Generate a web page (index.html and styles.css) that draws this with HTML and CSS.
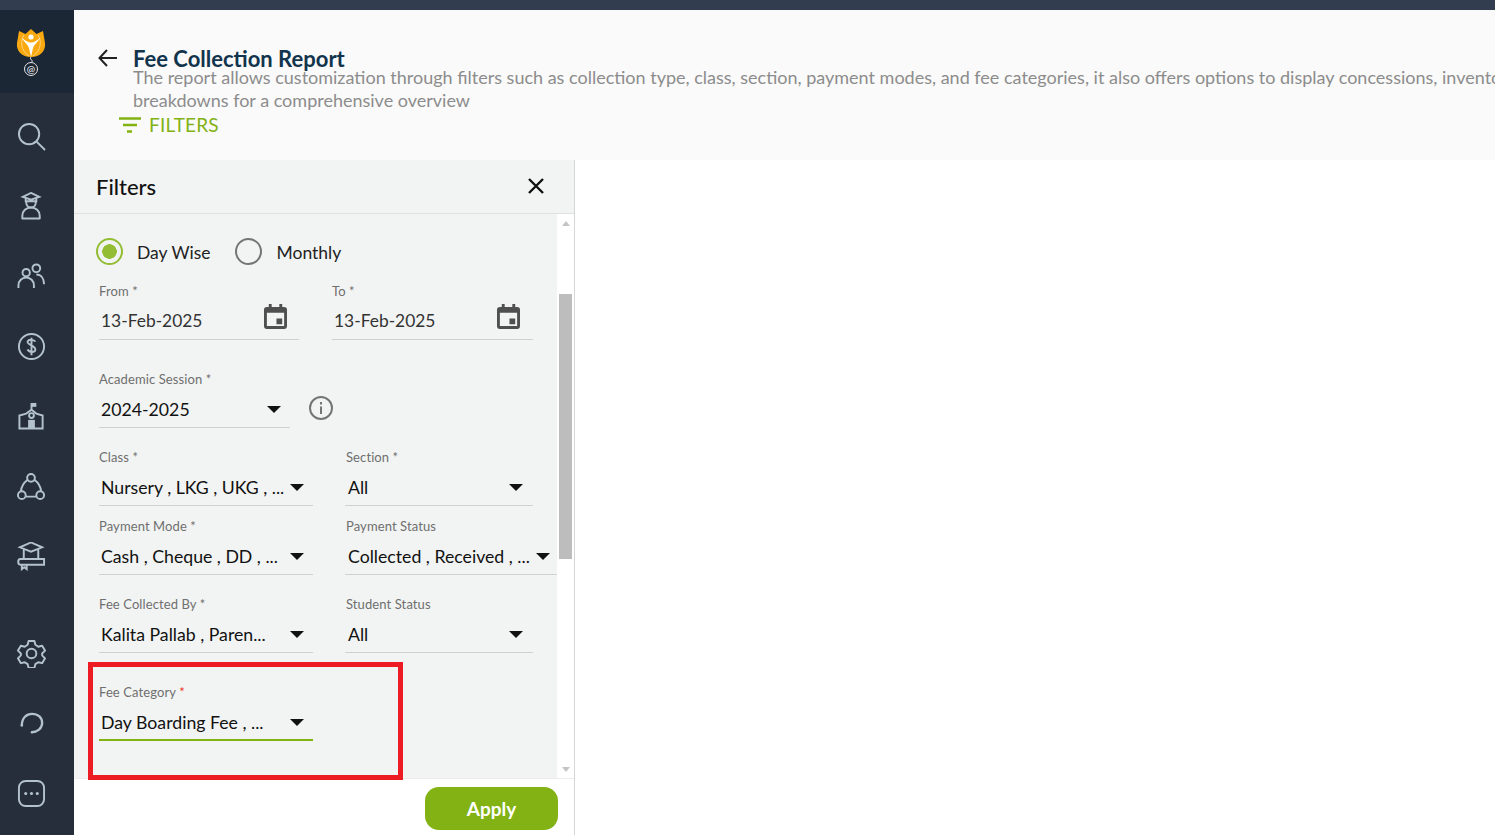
FILE: index.html
```html
<!DOCTYPE html>
<html lang="en">
<head>
    <meta charset="UTF-8">
    <title>Fee Collection Report</title>
    <link rel="stylesheet" href="styles.css">
</head>
<body>
    <div class="top-strip"></div>
    <div class="app">
        <nav class="sidebar">
            <div class="logo">
                <svg width="30" height="47" viewBox="0 0 30 47">
                    <path d="M15 0l5.500 5L27 2l2 12c1 8-5 14-14 14S0 22 1 14L3 2l6.500 3z" fill="#f9a90f"/>
                    <path d="M8 6C4 12 5 22 13 27M22 6c4 6 3 16-5 21" fill="none" stroke="#fdd27c" stroke-width="1"/>
                    <path d="M5.500 8.500C9 14 12 16 13 19l2 9 2-9c1-3 4-5 7.500-10.500C20.500 12 18 13.500 15 13.500S9.500 12 5.500 8.500z" fill="#fff"/>
                    <circle cx="15" cy="8" r="2.600" fill="#fff"/>
                    <path d="M15 28c-2 2 2 3 1 5" fill="none" stroke="#fff" stroke-width="1"/>
                    <circle cx="15" cy="40" r="6.500" fill="none" stroke="#e8e8e8" stroke-width="1"/>
                    <text x="15" y="43.500" class="logo-at">@</text>
                </svg>
            </div>
            <div class="nav-group">
                <a class="nav-item"><svg viewBox="0 0 30 30"><circle cx="12.500" cy="12.500" r="10.500"/><path d="M20 20l9 9"/></svg></a>
                <a class="nav-item"><svg viewBox="0 0 30 30"><path d="M14.500 1L23 5l-8.500 3L6 5zM9 6.500v3h11v-3"/><path d="M9.500 10c0 4 2.500 6 5 6s5-2 5-6"/><path d="M5.500 27.500v-3c0-5 4-8.500 9-8.500s9 3.500 9 8.500v3z" stroke-linejoin="round"/></svg></a>
                <a class="nav-item"><svg viewBox="0 0 30 30"><circle cx="9.500" cy="11" r="3.800"/><circle cx="20" cy="6.500" r="4"/><path d="M1.500 27v-3a8 8 0 0 1 16 0v3M20 13c5 0 8 4 8 10"/></svg></a>
                <a class="nav-item"><svg viewBox="0 0 30 30"><circle cx="15" cy="15" r="13"/><path d="M19 10c-1-2-7-3-8 0s8 4 8 8-7 3-8 0M15 6v18"/></svg></a>
                <a class="nav-item"><svg viewBox="0 0 30 30"><path d="M2.500 27.500V14l7-2L15 8l5 4 6.500 2v13.500zM15 8V1"/><path d="M15 1h5v4h-5z" class="solid"/><circle cx="15" cy="14" r="2.500"/><rect x="11.500" y="18.500" width="7" height="9" class="solid"/></svg></a>
                <a class="nav-item"><svg viewBox="0 0 30 30"><circle cx="14.500" cy="6" r="4"/><circle cx="5" cy="24" r="4"/><circle cx="24" cy="24" r="4"/><path d="M11 8C7 11 4.500 15 4 20M18 8c4 3 6.500 7 7 12M9 25.500h11"/></svg></a>
                <a class="nav-item"><svg viewBox="0 0 30 30"><path d="M14.500.5L26 5.500 14.500 10 3 5.500zM7 8v9.500M22 8v9.500"/><path d="M3.500 17.500H28v6H3.500c-3 0-3-6 0-6zM5 23.500V28l2.500-2 2.500 2v-4.500"/></svg></a>
            </div>
            <div class="nav-group nav-bottom">
                <a class="nav-item"><svg viewBox="0 0 30 30"><circle cx="15" cy="15" r="5"/><path d="M12 2h6l1 4 3 2 4-1 3 5-3 3v2l3 3-3 5-4-1-3 2-1 4h-6l-1-4-3-2-4 1-3-5 3-3v-2l-3-3 3-5 4 1 3-2z" stroke-linejoin="round"/></svg></a>
                <a class="nav-item"><svg viewBox="0 0 30 30"><path d="M5 17C5 9 10 5 15.500 5 22 5 26 9 26 14.500 26 20 21 24 15 24" stroke-width="2.400"/><circle cx="15.500" cy="24" r="1.300" class="solid"/><circle cx="5" cy="17" r="1.300" class="solid"/></svg></a>
                <a class="nav-item"><svg viewBox="0 0 30 30"><rect x="2" y="2" width="26" height="26" rx="7"/><circle cx="9" cy="15" r="1.600" class="solid"/><circle cx="15" cy="15" r="1.600" class="solid"/><circle cx="21" cy="15" r="1.600" class="solid"/></svg></a>
            </div>
        </nav>

        <main class="main">
            <header class="page-head">
                <div class="title-row">
                    <svg class="back-icon" width="20" height="18" viewBox="0 0 20 18"><path d="M19 9H2M9 1L1.500 9 9 17"/></svg>
                    <div class="title-text">
                        <h1>Fee Collection Report</h1>
                        <p>The report allows customization through filters such as collection type, class, section, payment modes, and fee categories, it also offers options to display concessions, inventory and other breakdowns for a comprehensive overview</p>
                    </div>
                </div>
                <button class="filter-toggle">
                    <svg width="24" height="16" viewBox="0 0 24 16"><path d="M1 1.500h22M5 8h14M9 14.500h5"/></svg>
                    FILTERS
                </button>
            </header>

            <section class="panel">
                <div class="panel-head">
                    <h2>Filters</h2>
                    <svg class="close-icon" width="18" height="18" viewBox="0 0 18 18"><path d="M2 2l14 14M16 2L2 16"/></svg>
                </div>
                <div class="panel-body">
                    <form class="form">
                        <div class="radio-row">
                            <span class="radio on"></span><span class="radio-label">Day Wise</span>
                            <span class="radio"></span><span class="radio-label">Monthly</span>
                        </div>

                        <div class="row row-dates">
                            <div class="field w-from">
                                <label>From *</label>
                                <div class="value">13-Feb-2025 <svg class="cal" viewBox="0 0 24 26"><path d="M5 0h3v3h8V0h3v3h2a3 3 0 0 1 3 3v17a3 3 0 0 1-3 3H3a3 3 0 0 1-3-3V6a3 3 0 0 1 3-3h2zM3 9v14h18V9zM13 15h6v6h-6z" fill-rule="evenodd"/></svg></div>
                            </div>
                            <div class="field w-to">
                                <label>To *</label>
                                <div class="value">13-Feb-2025 <svg class="cal" viewBox="0 0 24 26"><path d="M5 0h3v3h8V0h3v3h2a3 3 0 0 1 3 3v17a3 3 0 0 1-3 3H3a3 3 0 0 1-3-3V6a3 3 0 0 1 3-3h2zM3 9v14h18V9zM13 15h6v6h-6z" fill-rule="evenodd"/></svg></div>
                            </div>
                        </div>

                        <div class="row row-session">
                            <div class="field w-session">
                                <label>Academic Session *</label>
                                <div class="value dark">2024-2025<span class="caret"></span></div>
                            </div>
                            <svg class="info-icon" width="26" height="26" viewBox="0 0 26 26"><circle cx="13" cy="13" r="11"/><path d="M13 11.500v7.500M13 7v2.500"/></svg>
                        </div>

                        <div class="row row-near">
                            <div class="field w-left">
                                <label>Class *</label>
                                <div class="value dark">Nursery , LKG , UKG , ...<span class="caret"></span></div>
                            </div>
                            <div class="field w-right">
                                <label>Section *</label>
                                <div class="value dark">All<span class="caret"></span></div>
                            </div>
                        </div>

                        <div class="row row-tight">
                            <div class="field w-left">
                                <label>Payment Mode *</label>
                                <div class="value dark">Cash , Cheque , DD , ...<span class="caret"></span></div>
                            </div>
                            <div class="field w-wide">
                                <label>Payment Status</label>
                                <div class="value dark">Collected , Received , ...<span class="caret"></span></div>
                            </div>
                        </div>

                        <div class="row row-near">
                            <div class="field w-left">
                                <label>Fee Collected By *</label>
                                <div class="value dark">Kalita Pallab , Paren...<span class="caret"></span></div>
                            </div>
                            <div class="field w-right">
                                <label>Student Status</label>
                                <div class="value dark">All<span class="caret"></span></div>
                            </div>
                        </div>

                        <div class="row row-session">
                            <div class="field w-left active">
                                <label>Fee Category <em>*</em></label>
                                <div class="value dark">Day Boarding Fee , ...<span class="caret"></span></div>
                            </div>
                        </div>
                    </form>
                    <div class="scrollbar">
                        <span class="arrow up"></span>
                        <span class="thumb"></span>
                        <span class="arrow down"></span>
                    </div>
                </div>
                <div class="panel-foot">
                    <button class="apply">Apply</button>
                </div>
                <div class="highlight"></div>
            </section>
        </main>
    </div>
</body>
</html>
```

FILE: styles.css
```css
* {
    box-sizing: border-box;
}
html, body {
    height: 100%;
}
body {
    margin: 0;
    font-family: Lato, "Noto Sans", sans-serif;
    background-color: #fff;
    color: #1b1b1b;
    overflow: hidden;
    display: flex;
    flex-direction: column;
}
.top-strip {
    height: 10px;
    background-color: #333d50;
    flex: none;
}
.app {
    flex: 1;
    display: flex;
    min-height: 0;
}

/* sidebar */
.sidebar {
    width: 74px;
    flex: none;
    background-color: #252e3a;
    display: flex;
    flex-direction: column;
}
.logo {
    height: 83px;
    background-color: #1c2735;
    display: flex;
    justify-content: center;
    align-items: flex-start;
    padding: 19px 12px 0 0;
}
.logo-at {
    font-size: 10px;
    fill: #fff;
    text-anchor: middle;
}
.nav-group {
    padding-top: 8px;
}
.nav-bottom {
    padding-top: 27px;
}
.nav-item {
    height: 70px;
    display: flex;
    align-items: center;
    padding-left: 17px;
}
.nav-item svg {
    width: 29px;
    height: 29px;
    fill: none;
    stroke: #b4c2cf;
    stroke-width: 2;
}
.nav-item svg .solid {
    fill: #b4c2cf;
    stroke: none;
}

/* page */
.main {
    flex: 1;
    min-width: 0;
    display: flex;
    flex-direction: column;
}
.page-head {
    height: 150px;
    flex: none;
    background-color: #fafafa;
    padding: 40px 0 0 24px;
    overflow: hidden;
}
.title-row {
    display: flex;
    gap: 15px;
    width: 1500px;
}
.back-icon {
    flex: none;
    margin-top: -1px;
    fill: none;
    stroke: #222;
    stroke-width: 2;
}
.title-text h1 {
    margin: 0;
    padding-top: 1px;
    font-size: 22px;
    line-height: 15px;
    font-weight: 700;
    color: #12344d;
}
.title-text p {
    margin: 0;
    font-size: 18px;
    line-height: 23px;
    color: #8c8c8c;
}
.filter-toggle {
    display: flex;
    align-items: center;
    gap: 7px;
    margin: 1px 0 0 20px;
    padding: 0;
    border: none;
    background: none;
    font: inherit;
    font-size: 19px;
    line-height: 24px;
    letter-spacing: .2px;
    color: #82b214;
}
.filter-toggle svg {
    fill: none;
    stroke: #82b214;
    stroke-width: 2.500;
}

/* filter panel */
.panel {
    width: 501px;
    flex: 1;
    min-height: 0;
    position: relative;
    display: flex;
    flex-direction: column;
    border-right: 1px solid #d6d6d6;
}
.panel-head {
    height: 54px;
    flex: none;
    display: flex;
    align-items: center;
    justify-content: space-between;
    padding: 0 29px 0 22px;
    background-color: #f2f4f3;
    border-bottom: 1px solid #e0e0e0;
}
.panel-head h2 {
    margin: 0;
    font-size: 22px;
    font-weight: 500;
    color: #111;
}
.close-icon {
    margin-top: -2px;
    fill: none;
    stroke: #111;
    stroke-width: 2.400;
}
.panel-body {
    flex: 1;
    min-height: 0;
    display: flex;
}
.form {
    width: 483px;
    background-color: #f2f4f3;
    padding: 23px 0 0 25px;
    overflow: hidden;
}
.radio-row {
    display: flex;
    align-items: center;
    height: 28px;
    margin-left: -3px;
}
.radio {
    width: 27px;
    height: 27px;
    border-radius: 50%;
    border: 2px solid #757575;
    flex: none;
}
.radio.on {
    border-color: #93bd33;
    background: radial-gradient(circle, #93bd33 0 7px, transparent 7.500px);
}
.radio-label {
    font-size: 17.500px;
    margin: 3px 25px 0 14px;
    color: #222;
}
.row {
    display: flex;
    width: 460px;
}
.row-dates {
    margin-top: 18px;
    gap: 33px;
}
.row-session {
    margin-top: 31px;
    gap: 18px;
    align-items: center;
}
.row-near {
    margin-top: 21px;
    gap: 32px;
}
.row-tight {
    margin-top: 12px;
    gap: 32px;
}
.field {
    height: 57px;
    flex: none;
    border-bottom: 1px solid #cfd1d0;
}
.field.active {
    border-bottom: 2px solid #82b214;
}
.field label {
    display: block;
    font-size: 13px;
    line-height: 16px;
    letter-spacing: .1px;
    color: #6f6f6f;
}
.field label em {
    font-style: normal;
    color: #f0341f;
}
.w-from {
    width: 200px;
}
.w-to {
    width: 201px;
}
.w-session {
    width: 191px;
}
.w-left {
    width: 214px;
}
.w-right {
    width: 188px;
}
.w-wide {
    width: 212px;
}
.w-right label, .w-wide label {
    padding-left: 1px;
}
.value {
    display: flex;
    align-items: center;
    justify-content: space-between;
    height: 32px;
    margin-top: 5px;
    padding: 0 12px 0 2px;
    font-size: 17.400px;
    color: #333;
    white-space: nowrap;
}
.w-to .value {
    padding-right: 13px;
}
.value.dark {
    font-size: 17.700px;
    color: #111;
    padding: 2px 9px 0 2px;
}
.w-right .value.dark {
    padding: 2px 10px 0 3px;
}
.w-wide .value.dark {
    padding: 2px 7px 0 3px;
}
.caret {
    flex: none;
    border-left: 7px solid transparent;
    border-right: 7px solid transparent;
    border-top: 7px solid #111;
}
.cal {
    width: 23px;
    height: 25px;
    margin-top: -8px;
    fill: #4f4f4f;
    flex: none;
}
.info-icon {
    flex: none;
    margin-top: 17px;
    fill: none;
    stroke: #757575;
    stroke-width: 2;
}

/* the fake scrollbar */
.scrollbar {
    width: 17px;
    flex: none;
    background-color: #fff;
    display: flex;
    flex-direction: column;
    align-items: center;
    padding-top: 7px;
}
.thumb {
    width: 13px;
    height: 265px;
    margin-top: 68px;
    background-color: #bdbdbd;
}
.arrow {
    border-left: 4px solid transparent;
    border-right: 4px solid transparent;
}
.arrow.up {
    border-bottom: 5px solid #c4c4c4;
}
.arrow.down {
    margin-top: auto;
    margin-bottom: 6px;
    border-top: 5px solid #c4c4c4;
}
.panel-foot {
    height: 57px;
    flex: none;
    background-color: #fff;
    border-top: 1px solid #ececec;
    display: flex;
    justify-content: flex-end;
    align-items: flex-start;
    padding: 8px 16px 0 0;
}
.apply {
    width: 133px;
    height: 43px;
    border: none;
    border-radius: 14px;
    background-color: #82b214;
    color: #fff;
    font: inherit;
    font-size: 19px;
    font-weight: 700;
    padding-bottom: 2px;
}
.highlight {
    position: absolute;
    left: 14px;
    top: 502px;
    width: 315px;
    height: 118px;
    border: 5px solid #ed1c24;
    pointer-events: none;
}
```
